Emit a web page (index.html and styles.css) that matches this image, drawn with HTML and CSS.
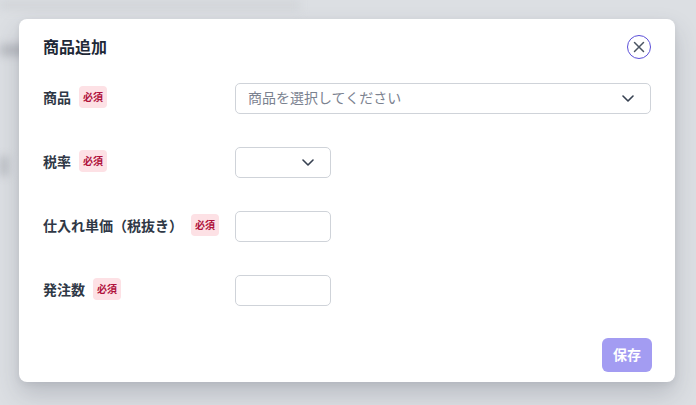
FILE: index.html
```html
<!DOCTYPE html>
<html lang="ja">
<head>
<meta charset="utf-8">
<title>商品追加</title>
<link rel="stylesheet" href="styles.css">
</head>
<body>
<div class="backdrop">
  <div class="bg-page">
    <div class="bg-bar"></div>
    <div class="bg-row"></div>
    <div class="bg-row short"></div>
  </div>
</div>
<div class="overlay">
  <div class="modal">
    <div class="modal-header">
      <h2 class="modal-title">商品追加</h2>
      <button class="close-btn" type="button" aria-label="閉じる">
        <svg width="24" height="24" viewBox="0 0 24 24"><circle cx="12" cy="12" r="11.5" fill="none" stroke="#5b4fd8" stroke-width="1"/><path d="M7.5 7.5 L16.5 16.5 M16.5 7.5 L7.5 16.5" stroke="#4b5563" stroke-width="1.5" stroke-linecap="round"/></svg>
      </button>
    </div>
    <div class="form">
      <div class="label"><span>商品</span><span class="req">必須</span></div>
      <div class="select wide"><span class="placeholder">商品を選択してください</span>
        <svg class="chev" width="12" height="7" viewBox="0 0 12 7"><path d="M1 1 L6 6 L11 1" fill="none" stroke="#374151" stroke-width="1.6" stroke-linecap="round" stroke-linejoin="round"/></svg>
      </div>
      <div class="label"><span>税率</span><span class="req">必須</span></div>
      <div class="select small"><span class="placeholder"></span>
        <svg class="chev" width="12" height="7" viewBox="0 0 12 7"><path d="M1 1 L6 6 L11 1" fill="none" stroke="#374151" stroke-width="1.6" stroke-linecap="round" stroke-linejoin="round"/></svg>
      </div>
      <div class="label"><span>仕入れ単価（税抜き）</span><span class="req">必須</span></div>
      <div class="input small"></div>
      <div class="label"><span>発注数</span><span class="req">必須</span></div>
      <div class="input small"></div>
    </div>
    <div class="footer">
      <button class="save-btn" type="button">保存</button>
    </div>
  </div>
</div>
</body>
</html>
```
FILE: styles.css
```css
* { box-sizing: border-box; }
html, body { margin: 0; height: 100%; }
body {
  font-family: "Noto Sans CJK JP", "Noto Sans", sans-serif;
  background: #dcdfe3;
  overflow: hidden;
  position: relative;
}
.backdrop {
  position: absolute;
  inset: 0;
  filter: blur(4px);
}
.bg-bar { width: 300px; height: 10px; background: #d2d5d9; }
.bg-row { margin-top: 34px; width: 60px; height: 12px; background: #b9bcc2; }
.bg-row.short { margin-top: 100px; width: 8px; height: 20px; background: #b9bcc2; }
.overlay {
  position: absolute;
  inset: 0;
  padding: 19px 0 0 19px;
}
.modal {
  width: 656px;
  height: 363px;
  background: #fff;
  border-radius: 8px;
  box-shadow: 0 12px 24px rgba(60, 66, 80, 0.22), 0 2px 6px rgba(60, 66, 80, 0.08);
  padding: 16px 24px 10px;
  display: flex;
  flex-direction: column;
}
.modal-header {
  display: flex;
  align-items: center;
  justify-content: space-between;
  height: 24px;
}
.modal-title {
  margin: 0 0 2px;
  font-size: 16px;
  font-weight: 700;
  color: #1f2937;
  line-height: 22px;
}
.close-btn {
  width: 24px;
  height: 24px;
  padding: 0;
  border: 0;
  background: none;
  display: block;
}
.close-btn svg { display: block; }
.form {
  margin-top: 24px;
  display: grid;
  grid-template-columns: 192px 1fr;
  row-gap: 33px;
  align-items: center;
}
.label {
  display: flex;
  align-items: center;
  gap: 8px;
  font-size: 14px;
  font-weight: 700;
  color: #2f3846;
  margin-bottom: 4px;
}
.req {
  display: inline-block;
  background: #fde1e5;
  color: #b0113c;
  font-size: 10px;
  font-weight: 700;
  line-height: 21px;
  height: 22px;
  padding: 0 4px;
  border-radius: 4px;
}
.select, .input {
  height: 31px;
  border: 1px solid #cfd3d9;
  border-radius: 5px;
  background: #fff;
  display: flex;
  align-items: center;
  justify-content: space-between;
  padding: 0 16px 0 12px;
}
.placeholder {
  font-size: 14px;
  line-height: 18px;
  color: #7b8290;
  margin-bottom: 3px;
}
.wide { width: 416px; }
.small { width: 96px; }
.chev { display: block; }
.footer {
  margin-top: auto;
  display: flex;
  justify-content: flex-end;
}
.save-btn {
  width: 50px;
  height: 34px;
  border: 0;
  border-radius: 6px;
  background: #a39cf2;
  color: #fff;
  font-family: inherit;
  font-size: 14px;
  font-weight: 700;
  padding: 0 0 2px;
  margin-right: -1px;
}
```
